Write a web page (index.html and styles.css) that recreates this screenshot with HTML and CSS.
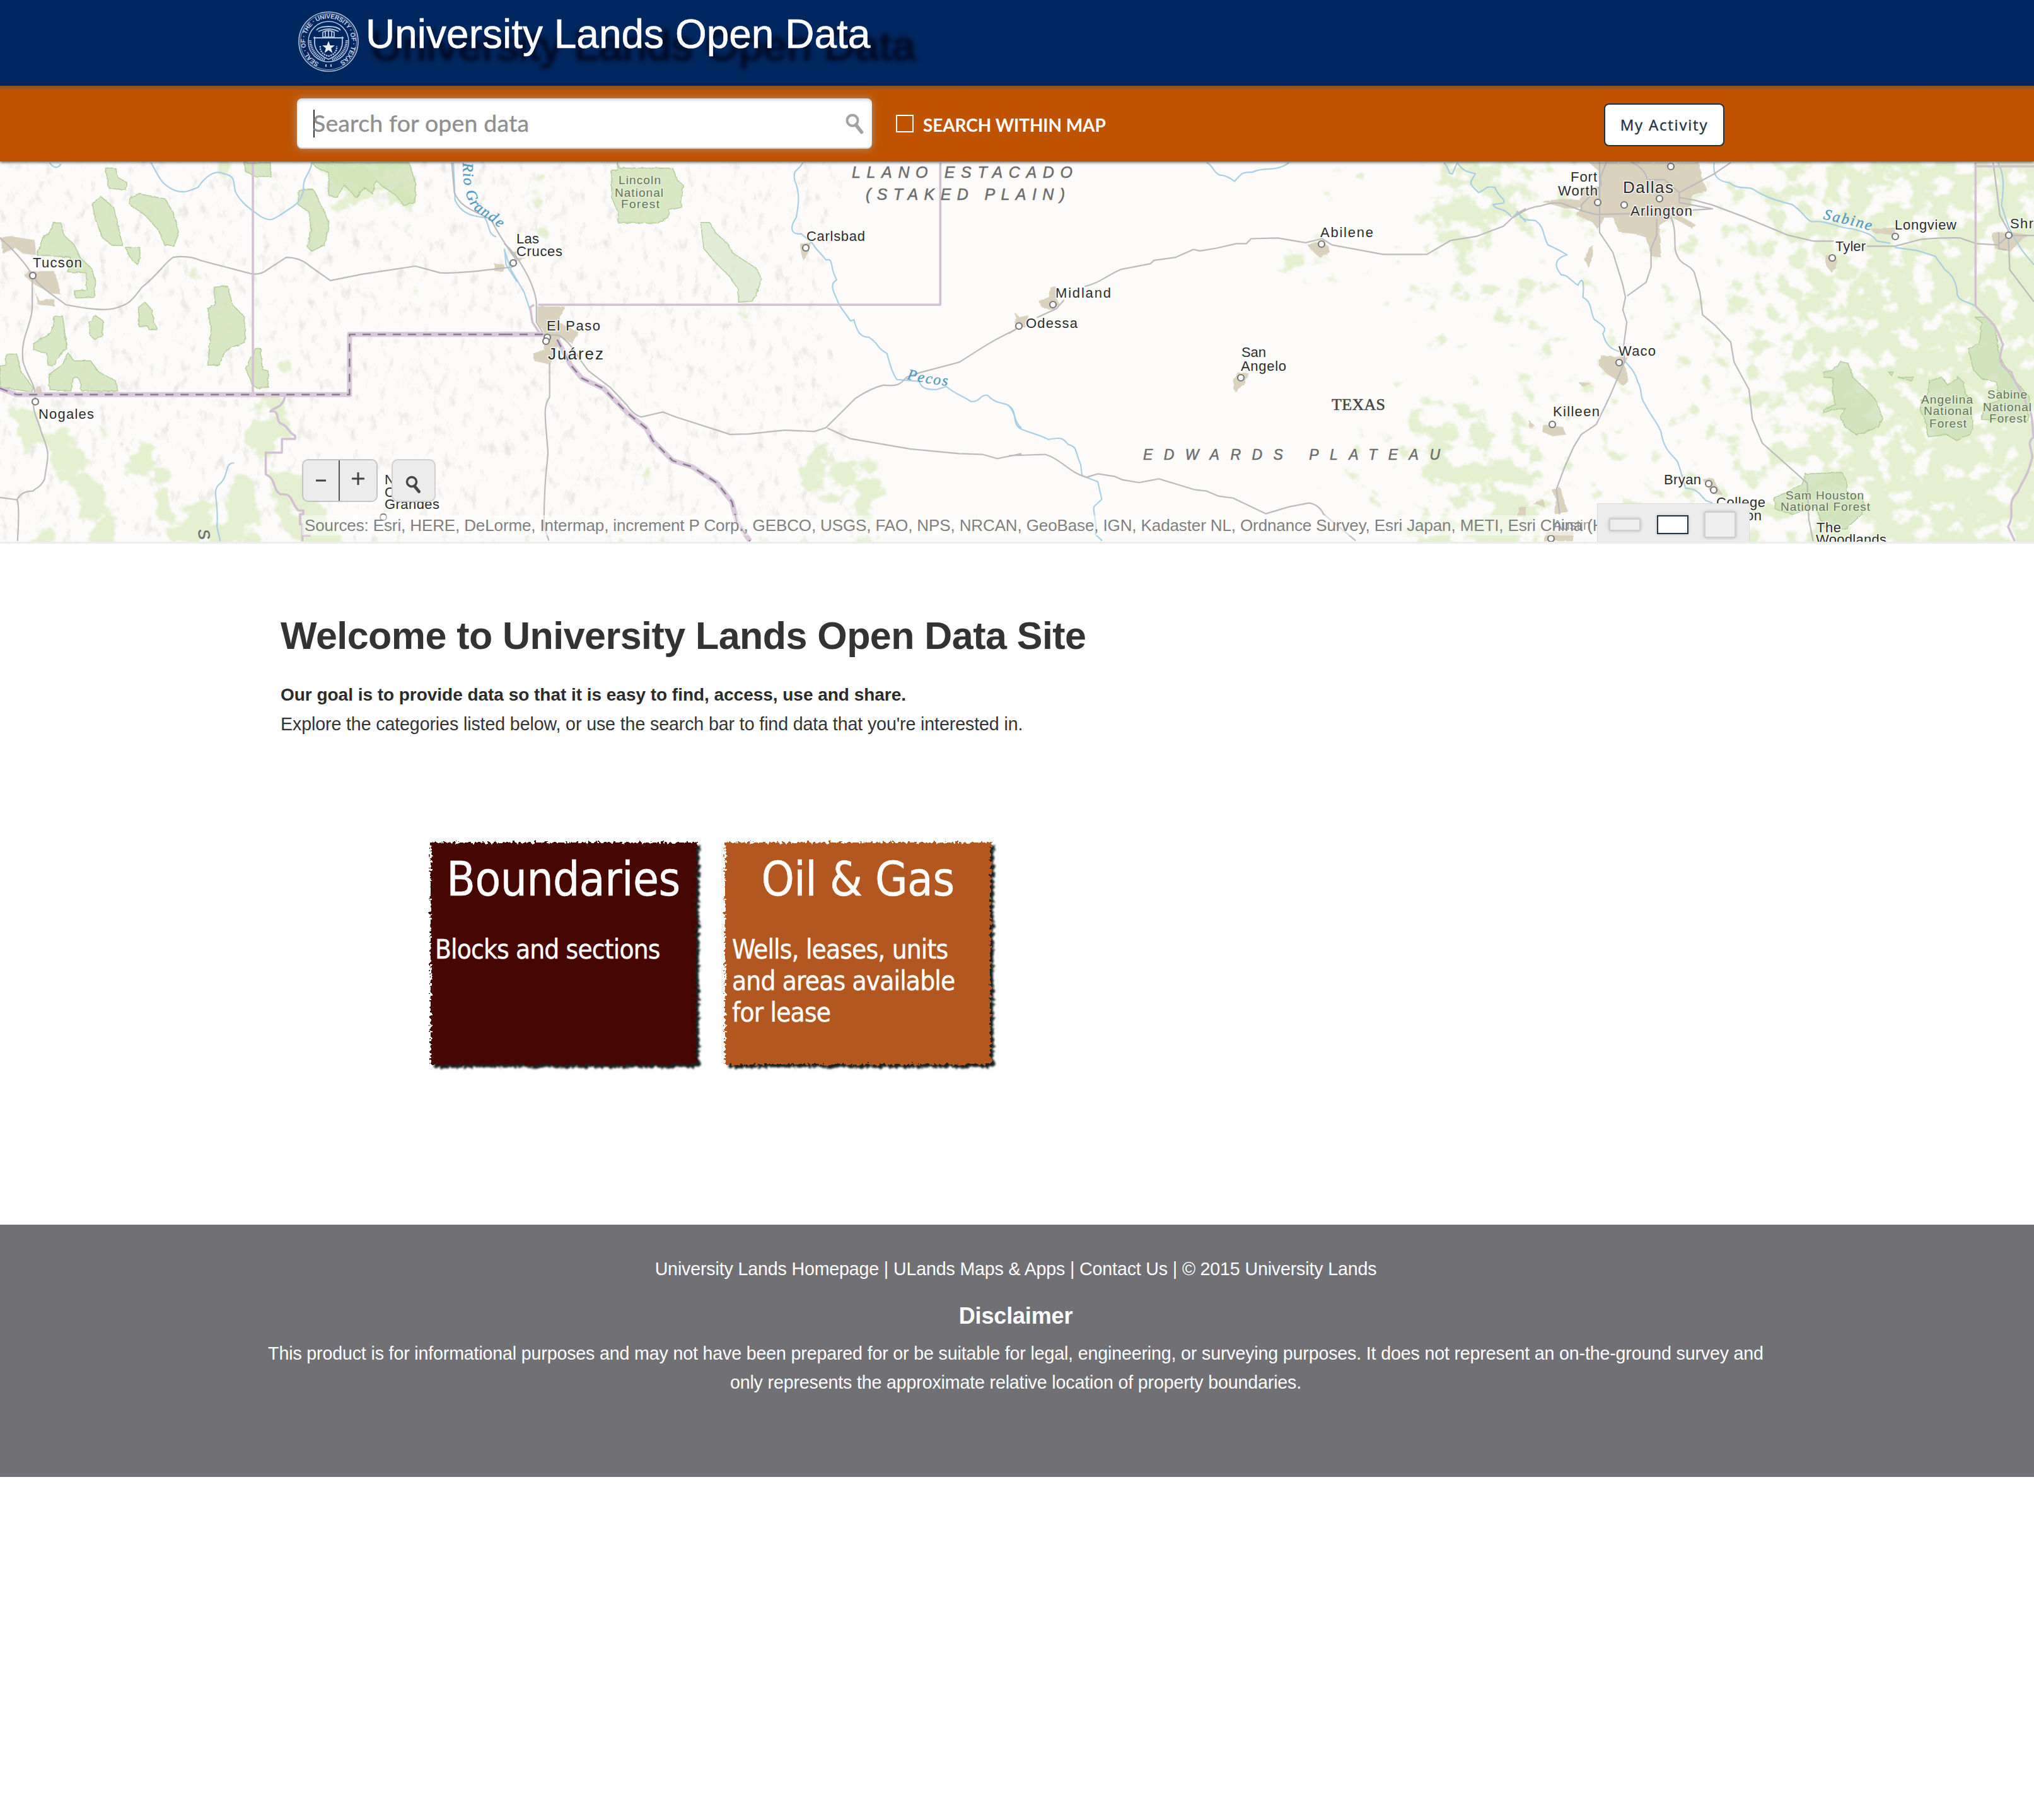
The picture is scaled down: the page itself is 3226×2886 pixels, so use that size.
FILE: index.html
```html
<!DOCTYPE html>
<html lang="en">
<head>
<meta charset="utf-8">
<title>University Lands Open Data</title>
<link rel="stylesheet" href="styles.css">
</head>
<body>
<header class="brand">
  <svg class="seal" viewBox="-50 -50 100 100" aria-hidden="true">
    <defs><path id="ring" d="M-15 33.5A36.7 36.7 0 1 1 15 33.5"/></defs>
    <g fill="none" stroke="#b4c4de">
      <circle r="47" stroke-width="1.6"/><circle r="44.6" stroke-width=".8"/><circle r="32" stroke-width="1.5"/>
      <path d="M-24 -6H24M-19 -18C-14 -26 14 -26 19 -18M-22 -8V2C-22 16 -8 25 0 28C8 25 22 16 22 2V-8" stroke-width="1.8"/>
      <path d="M-16 -16Q0 -24 16 -16M-9 -15Q0 -20 9 -15V-7H-9ZM-5 -16V-7M0 -17V-7M5 -16V-7" stroke-width="1.8"/>
      <path d="M-13 7C-14 16 -8 21 0 23C8 21 14 16 13 7" stroke-width="2.4" stroke-dasharray="2.5 1.2"/>
      <path d="M-29 -2C-28 14 -18 25 -5 29M29 -2C28 14 18 25 5 29" stroke-width="4" stroke-dasharray="1.6 1.2"/>
    </g>
    <path fill="#e9eff8" d="M0 -1L2.6 6H10L4.200 10.500L6.300 18L0 13.600L-6.300 18L-4.200 10.500L-10 6H-2.600Z"/>
    <text class="seal-text"><textPath href="#ring" textLength="196">SEAL · OF · THE · UNIVERSITY · OF · TEXAS</textPath></text>
    <path stroke="#b4c4de" stroke-width="2" d="M-4 36V40M4 36V40"/>
  </svg>
  <div class="brand-name">University Lands Open Data</div>
</header>

<div class="searchbar">
  <div class="search-field">
    <span class="placeholder">Search for open data</span>
    <svg class="search-icon" viewBox="0 0 30 34"><circle cx="11" cy="11" r="8.500" fill="none" stroke="#a3a3a3" stroke-width="4"/><path d="M16.500 18L25.500 29.500" stroke="#a3a3a3" stroke-width="5.500" stroke-linecap="round"/></svg>
  </div>
  <label class="within"><span class="box"></span><span class="within-text">SEARCH WITHIN MAP</span></label>
  <button class="activity">My Activity</button>
</div>

<section class="map">
<svg class="basemap" viewBox="0 256 3226 603" width="3226" height="603">
  <defs>
    <filter id="veg" filterUnits="userSpaceOnUse" x="-100" y="150" width="3500" height="820" color-interpolation-filters="sRGB">
      <feGaussianBlur in="SourceAlpha" stdDeviation="12" result="soft"/>
      <feTurbulence type="fractalNoise" baseFrequency=".03 .034" numOctaves="5" seed="8" result="n"/>
      <feColorMatrix in="n" type="matrix" values="0 0 0 0 0  0 0 0 0 0  0 0 0 0 0  0 0 0 1 0" result="m"/>
      <feComposite in="m" in2="soft" operator="arithmetic" k1="0" k2="1" k3="1" k4="-1"/>
      <feComponentTransfer result="a"><feFuncA type="linear" slope="8"/></feComponentTransfer>
      <feFlood flood-color="#e3efce"/><feComposite operator="in" in2="a"/>
      <feGaussianBlur stdDeviation=".8"/>
    </filter>
    <filter id="relief" filterUnits="userSpaceOnUse" x="0" y="250" width="3226" height="620" color-interpolation-filters="sRGB">
      <feTurbulence type="fractalNoise" baseFrequency=".07 .04" numOctaves="4" seed="3"/>
      <feColorMatrix type="matrix" values="0 0 0 0 .5  0 0 0 0 .48  0 0 0 0 .45  0 0 0 1.3 -.76" result="r"/>
      <feComposite in="r" in2="SourceAlpha" operator="in"/>
    </filter>
    <filter id="jag" filterUnits="userSpaceOnUse" x="0" y="0" width="1700" height="1620">
      <feTurbulence type="fractalNoise" baseFrequency=".06" numOctaves="2" seed="5"/>
      <feDisplacementMap in="SourceGraphic" scale="9"/>
    </filter>
    <linearGradient id="east" x1="0" x2="1"><stop offset="0" stop-opacity=".32"/><stop offset=".25" stop-opacity=".43"/><stop offset=".42" stop-opacity=".58"/><stop offset="1" stop-opacity=".68"/></linearGradient>
    <path id="rio" d="M734 258C734 296 740 322 754 334C770 346 782 350 800 370"/>
    <path id="pecos" d="M1438 601C1460 606 1480 610 1508 612"/>
    <path id="sabine" d="M2891 347C2920 354 2945 358 2974 368"/>
  </defs>
  <rect y="250" width="3226" height="620" fill="#fcfbf9"/>

  <g filter="url(#relief)">
    <path d="M0 250H1350L1300 480L1400 870H0Z" fill-opacity=".4"/>
  </g>

  <g filter="url(#veg)">
    <path d="M2560 150H3400V970H2540L2640 620Z" fill="url(#east)"/>
    <path d="M2860 420H3400V970H2900Z" fill-opacity=".12"/>
    <path d="M2400 150H2600V970H2330L2420 560Z" fill-opacity=".38"/>
    <path d="M2280 250L2400 200L2410 330L2340 430L2260 380Z" fill-opacity=".45"/>
    <path d="M2140 200H2420V520L2200 480L1990 390Z" fill-opacity=".28"/>
    <path d="M2220 640L2350 640L2430 870L2400 960H2200L2260 780Z" fill-opacity=".36"/>
    <path d="M2080 660H2440V970H2080Z" fill-opacity=".34"/>
    <path d="M2000 405L2100 400L2120 445L2060 456Z" fill-opacity=".54"/>
    <path d="M2180 450H2420V660H2180Z" fill-opacity=".28"/>
    <path d="M1295 680L1330 715L1410 730L1405 785L1355 795L1300 808L1255 765Z" fill-opacity=".68"/>
    <path d="M1350 780L1390 780L1410 880H1350Z" fill-opacity=".6"/>
    <path d="M1150 480L1195 480L1168 522Z" fill-opacity=".85"/>
    <path d="M990 690L1090 800L1040 790ZM1180 750L1220 860L1185 830Z" fill-opacity=".7"/>
    <path d="M10 630L55 645L70 705L40 722L17 695ZM73 670L115 665L123 735L90 800ZM125 690L170 775L200 878H140L113 770Z" fill-opacity=".76"/>
    <path d="M145 660H180L168 730ZM217 675L256 695L295 870H265L218 720ZM365 745L412 755L425 876H335ZM295 790L340 780L335 880H285Z" fill-opacity=".76"/>
    <path d="M390 640L445 620L468 635L466 695L410 745L383 700ZM420 730L495 755L570 878H465L425 780ZM185 720L220 715L204 790Z" fill-opacity=".76"/>
    <path d="M45 820H95V878H55ZM288 415L327 425L322 453L294 446ZM222 575L258 580L243 615ZM648 445L678 475L655 488ZM632 340L657 370L640 388ZM444 560H468V610H444Z" fill-opacity=".85"/>
    <path d="M335 240L385 240L375 305L340 300ZM395 270L455 250L475 305L425 315Z" fill-opacity=".6"/>
    <path d="M828 240L862 280L878 400L864 440L845 340Z" fill-opacity=".75"/>
    <path d="M490 240H665V340H515Z" fill-opacity=".6"/>
  </g>

  <!-- national forests, urban areas, rivers, roads and borders, west to east -->
  <g transform="translate(0 250) scale(.52296 .39541)">
    <g class="forest" filter="url(#jag)">
      <path d="M320 42H350L358 80L385 100L382 130L330 122ZM280 185L305 155L345 200L372 352H340L310 320L290 250ZM392 160L420 145L500 165L525 220L543 300L528 352H500L480 290L440 230L395 190ZM380 360H424V400L418 430L400 410Z"/>
      <path d="M162 262H185L193 310L225 350L243 400L278 445L290 500L285 560L230 563L225 535L262 530V462L205 458L215 400L112 390L130 320L150 300Z"/>
      <path d="M420 600L440 580L460 610L467 660L478 690H452L448 675H420ZM272 660L290 633L313 655L310 715L290 732L272 712ZM165 640L190 635L203 765L180 790L160 838L145 830L142 785L102 770V745L155 705Z"/>
      <path d="M650 520L690 515L705 590L742 640L743 740L685 770L665 832H630L640 690L630 605L652 590ZM0 835L18 832V788H52L60 850L98 920L98 940L0 920ZM148 870L190 830L205 782L225 815H275L300 860L350 895L357 936H246C246 880 232 875 222 885L215 936L150 930Z"/>
      <path d="M775 765H790L796 850L813 855V920L780 925L765 910L746 850ZM742 20H820V75H775L745 55ZM905 130L950 128L970 180L998 260L985 350L945 375L932 355L945 290L935 215L905 190Z"/>
      <path d="M945 20H1240L1262 110L1258 180L1225 192L1200 150L1160 115L1140 90L1130 145L1105 120L1080 160L1045 110L1020 160L997 150V60L960 40Z"/>
    </g>
    <g class="urban" filter="url(#jag)"><path d="M0 320L30 315L105 330L110 390L70 385L45 360L10 385ZM85 455L165 455L185 550L150 540L100 505L75 475ZM108 540L120 575L165 565V595L115 590ZM1500 425L1530 430L1525 455H1500ZM110 920H125V950H110ZM1550 380L1568 375V410Z"/></g>
    <g class="water"><path d="M150 20Q170 55 185 25M458 20C480 70 485 100 520 125C560 150 575 130 600 120C620 80 650 45 680 65C720 75 705 110 715 140C735 190 770 215 790 235C820 260 830 245 850 230C880 200 912 190 920 130C918 70 945 60 945 20M1375 20L1380 170C1400 230 1440 235 1470 240C1485 270 1480 310 1505 317M1530 365L1535 430L1568 498M710 1225C680 1220 695 1280 665 1310C640 1340 665 1370 658 1480L668 1538"/></g>
    <g class="road"><path d="M0 322C50 380 80 430 100 474C120 520 160 550 200 590C260 605 310 615 345 605C390 590 400 575 430 520C480 470 500 420 525 400Q570 390 610 413L760 465Q790 472 810 450L868 400Q910 400 940 435L1002 493L1100 467L1260 435L1335 462Q1400 465 1556 438M98 480V600C95 680 60 720 70 820C90 900 105 900 107 960C90 1010 120 1060 125 1100C155 1200 145 1190 135 1290C120 1330 105 1325 100 1337C75 1337 60 1350 52 1372L0 1363M52 1372Q60 1400 53 1538M1370 20L1378 140C1400 210 1450 215 1490 250C1520 330 1550 380 1568 415"/></g>
    <path class="state" d="M767 20V950M865 950C860 1010 825 1000 820 1018C850 1010 835 1050 850 1065C880 1080 870 1100 895 1115V1128H855V1183H806V1270C840 1290 825 1330 850 1350C890 1345 880 1380 905 1415H920V1430H910V1470H917V1538M915 1515H942"/>
    <path class="nation" d="M0 925L50 950H1060V709H1568"/><path class="nation-dash" d="M0 925L50 950H1060V709H1568"/>
  </g>

  <g transform="translate(800 250) scale(.52296 .39541)">
    <g class="forest" filter="url(#jag)">
      <path d="M343 20L350 42H510L525 90L542 110L535 200L500 210L495 240L465 262H345L345 220L325 160V50H343Z"/>
      <path class="pale" d="M595 260H622L640 300L680 350L690 380L765 445L780 490L755 575L710 580V530L685 480L640 420L605 365Z"/>
    </g>
    <g class="urban" filter="url(#jag)"><path d="M100 597H183L165 660L225 700L205 745L170 720L140 830L90 815L88 785L120 770V700L100 660ZM895 345L930 340L920 385L905 412ZM30 400L65 402L50 415ZM1550 620L1568 655V690L1550 680Z"/></g>
    <g class="water"><path d="M0 370L20 450L60 540L80 620M905 20C890 60 875 40 880 90C900 150 890 200 885 240C860 290 875 310 900 305L935 345C950 380 960 380 975 410C1000 400 985 440 1008 490C980 510 1005 550 1015 590L1050 655L1060 650C1070 700 1080 720 1105 720C1140 750 1125 760 1160 785C1170 830 1175 860 1190 890L1258 897C1265 930 1290 930 1310 930L1340 918C1370 950 1390 955 1415 978C1445 980 1440 950 1465 953C1490 990 1515 980 1530 995C1550 1020 1545 1060 1568 1085"/></g>
    <g class="road"><path d="M0 345C40 390 90 500 97 580V660L120 710L165 712C210 750 220 800 255 855L320 920L370 990C385 1020 400 1035 415 1040L480 1020L520 1040L685 1110L740 1108L850 1093L940 1098L975 1083L1065 965Q1110 925 1150 912C1200 920 1205 900 1220 880L1260 862L1380 820C1440 770 1470 740 1550 690M980 1085L1050 1127L1230 1168L1380 1187L1450 1190L1495 1207L1568 1187M137 825V960C115 1000 125 1050 132 1180C130 1250 120 1270 120 1480L135 1536"/></g>
    <path class="state" d="M102 590H1322V20M90 590L78 600L85 660L105 700"/>
    <path class="nation" d="M0 709H118M160 730L200 830L235 885L300 925L370 1020L430 1085L450 1135L510 1215L570 1240L645 1305L690 1380L705 1460L745 1538"/>
    <path class="nation-dash" d="M0 709H118M160 730L200 830L235 885L300 925L370 1020L430 1085L450 1135L510 1215L570 1240L645 1305L690 1380L705 1460L745 1538"/>
  </g>

  <g transform="translate(1600 250) scale(.52296 .39541)">
    <g class="urban" filter="url(#jag)"><path d="M125 520H145V560L155 590L130 610L100 600L90 575L120 560ZM30 640L60 632L50 680L20 690ZM905 350L940 335L970 355L972 380L945 402L925 380ZM695 860L728 865L715 910L685 942L680 900ZM1550 1400H1568V1440H1540Z"/></g>
    <g class="water"><path d="M600 20C620 30 620 60 640 70Q660 70 685 95C710 55 710 60 740 58C770 35 810 60 850 20M1320 20C1340 50 1330 65 1345 65L1360 20C1380 60 1395 55 1415 65C1400 100 1390 100 1425 140C1450 130 1440 110 1475 120C1480 150 1510 170 1500 182L1468 188C1480 215 1500 195 1525 238M1540 215L1568 258M0 995C30 1020 5 1070 40 1090C90 1115 80 1105 120 1130C160 1120 165 1125 180 1150C210 1160 200 1180 218 1230L222 1275L270 1300L282 1370L258 1400C255 1430 270 1460 262 1510L283 1536"/></g>
    <g class="road"><path d="M0 705L30 680M85 642L145 605L168 570M230 517C280 500 300 470 340 448L430 425L440 412L505 400L560 368L580 374L630 363L690 345H720L735 325L815 322L900 341L950 325L980 350L1135 388H1268L1340 332L1420 315L1500 275L1540 225L1568 205M0 1195L110 1190C160 1210 180 1260 235 1282L270 1268L320 1278L345 1292L395 1303L455 1288L565 1332L600 1337L635 1357L680 1365L780 1428L850 1400L910 1385Q940 1390 955 1430L1052 1536"/></g>
  </g>

  <g transform="translate(2400 250) scale(.52679 .39541)">
    <g class="forest dim" filter="url(#jag)">
      <path d="M935 865L975 840L985 818L1010 825L1022 880L1050 915L1070 940L1090 970L1112 1040L1100 1080L1070 1095L1035 1112L1000 1080L985 1040L1000 1005L960 1010L935 1025V1010L970 990L960 930L965 885L935 880Z"/>
      <path d="M1255 895L1290 880L1310 915L1340 880L1355 900L1360 945L1370 960L1385 1080L1375 1110L1335 1135L1305 1110L1250 1120L1240 1050L1225 1010L1230 970L1245 960Z"/>
      <path d="M1390 640L1425 640L1450 680L1465 800L1500 880L1555 960L1550 1055L1410 1050L1420 990L1465 975L1455 900L1410 885L1385 850L1372 770L1405 740L1410 660Z"/>
      <path d="M880 1268L990 1262L1005 1300L1005 1340L1055 1370L1050 1430L1000 1490L935 1480L910 1400L840 1430L790 1410L785 1360L820 1345L870 1310ZM1130 860L1145 860L1140 875ZM1160 882L1205 880L1200 895Z"/>
    </g>
    <g class="urban" filter="url(#jag)"><path d="M230 20H560L570 90L585 130L540 150L535 190L500 230L550 270L540 285L480 240L440 270L445 400L415 395L400 320L360 305L320 300L300 240H275L255 290L240 260L190 230L205 200L160 205L85 175L150 165L200 170L210 130L265 110L262 60ZM240 350V400L225 440L215 410L225 365ZM265 795L345 800L335 830L347 890L330 915L310 890L285 870L255 830ZM195 900L235 905L210 920ZM940 390L972 395L975 430L960 462L940 430ZM1075 285L1150 280L1150 310L1090 305ZM1440 300H1510L1550 310L1515 350L1500 378L1450 365ZM45 1050L65 1075L50 1085ZM90 1070L150 1080L160 1110L120 1118L88 1100ZM570 1290L600 1285L630 1350L600 1350ZM115 1330L140 1320L165 1420L125 1430L130 1370ZM60 1390L90 1370L95 1400ZM100 1500H180V1538H90Z"/></g>
    <g class="water"><path d="M0 240L15 215M20 235C40 260 60 245 70 255C95 280 90 320 105 350C140 370 150 380 162 390C120 405 125 440 145 470C165 470 170 490 195 512C205 480 215 480 210 560C240 580 230 620 245 650C280 680 280 690 270 705C280 760 300 770 325 780M335 815C360 850 370 870 375 900C390 930 380 960 395 985C420 1050 430 1050 445 1100C455 1180 480 1190 495 1220C510 1280 515 1300 518 1325C560 1330 560 1350 580 1375L600 1385M605 20C600 80 620 95 650 100C680 130 700 115 720 125C760 160 800 175 840 188C880 225 880 250 900 257C950 250 980 285 1020 285C1060 300 1080 305 1095 335L1135 343M1148 360L1215 372L1270 395L1300 450Q1335 480 1337 550C1345 580 1370 575 1395 598M1460 20C1475 60 1480 100 1470 190C1485 250 1490 290 1520 345C1530 375 1550 400 1568 430"/></g>
    <g class="road"><path d="M0 240C40 205 60 195 85 193Q125 175 150 185L205 212L250 228L350 225L470 238M260 20V300L300 380L330 510L338 560L330 610L342 660L333 750L335 820L290 960L250 1070L205 1110L182 1160L155 1240L130 1330L140 1430M360 20Q400 50 403 88H455L500 140L605 65L655 20M502 160L545 170L600 190L700 240L825 310L905 335H965M1065 355H1150L1230 327Q1300 320 1345 322L1395 345L1460 350L1492 312H1568M500 140V180L600 205L540 210M280 20L262 80L265 110L205 190V215M432 245V310L415 365V440L400 500L343 555M475 240C490 280 485 330 488 370C500 440 530 420 545 460L562 540L570 630L610 675L655 740L665 820L710 930L720 1050L750 1145L805 1210L885 1305L890 1450L903 1538M1445 20L1458 150L1465 230L1490 290L1495 450L1568 578M1462 300V365L1485 370"/></g>
    <path class="state" d="M1392 20V595L1425 640C1460 680 1460 710 1475 750C1455 820 1470 840 1500 860C1505 900 1540 950 1545 990C1570 1030 1560 1100 1568 1120C1545 1140 1560 1160 1563 1200C1550 1280 1530 1300 1520 1340C1480 1390 1515 1420 1490 1480L1510 1538M1392 35H1568"/>
  </g>

  <g class="town">
    <circle cx="52" cy="437" r="5"/><circle cx="56" cy="637" r="5"/><circle cx="814" cy="417" r="5"/><circle cx="868" cy="535" r="5"/><circle cx="866" cy="541" r="5"/><circle cx="1278" cy="393" r="5"/><circle cx="1670" cy="483" r="5"/><circle cx="1616" cy="517" r="5"/><circle cx="2096" cy="387" r="5"/><circle cx="1968" cy="599" r="5"/><circle cx="2534" cy="321" r="5"/><circle cx="2576" cy="325" r="5"/><circle cx="2632" cy="315" r="5"/><circle cx="2650" cy="264" r="5"/><circle cx="3006" cy="375" r="5"/><circle cx="2906" cy="409" r="5"/><circle cx="3186" cy="373" r="5"/><circle cx="2568" cy="575" r="5"/><circle cx="2462" cy="673" r="5"/><circle cx="2710" cy="767" r="5"/><circle cx="2718" cy="777" r="5"/><circle cx="2460" cy="854" r="5"/><circle cx="608" cy="820" r="5"/>
  </g>

  <g class="label">
    <text x="52" y="424" textLength="78">Tucson</text><text x="61" y="664" textLength="88">Nogales</text>
    <text x="819" y="386" textLength="36">Las</text><text x="819" y="406" textLength="73">Cruces</text>
    <text x="867" y="524" textLength="85">El Paso</text><text class="big" x="869" y="570" textLength="88">Juárez</text>
    <text x="1279" y="382" textLength="93">Carlsbad</text><text x="2094" y="376" textLength="84">Abilene</text>
    <text x="1674" y="472" textLength="88">Midland</text><text x="1627" y="520" textLength="82">Odessa</text>
    <text x="1969" y="566" textLength="39">San</text><text x="1968" y="588" textLength="72">Angelo</text>
    <text x="2491" y="288" textLength="42">Fort</text><text x="2471" y="310" textLength="63">Worth</text>
    <text class="big" x="2574" y="306" textLength="80">Dallas</text><text x="2586" y="342" textLength="98">Arlington</text>
    <text x="3005" y="364" textLength="98">Longview</text><text x="2911" y="398" textLength="48">Tyler</text><text x="3188" y="362" textLength="37">Shr</text>
    <text x="2567" y="564" textLength="59">Waco</text><text x="2463" y="660" textLength="74">Killeen</text><text x="2639" y="768" textLength="59">Bryan</text>
    <text x="2722" y="804" textLength="78">College</text><text x="2722" y="825" textLength="72">Station</text>
    <text x="2881" y="844" textLength="39">The</text><text x="2880" y="863" textLength="112">Woodlands</text>
    <text x="2463" y="840" textLength="60">Austin</text>
    <text x="610" y="768" textLength="62">Nuevo</text><text x="610" y="788" textLength="60">Casas</text><text x="610" y="807" textLength="87">Grandes</text>
  </g>
  <g class="label park">
    <text x="981" y="292" textLength="67">Lincoln</text><text x="975" y="312" textLength="77">National</text><text x="985" y="330" textLength="61">Forest</text>
    <text x="3047" y="640" textLength="82">Angelina</text><text x="3051" y="658" textLength="77">National</text><text x="3060" y="678" textLength="59">Forest</text>
    <text x="3152" y="632" textLength="63">Sabine</text><text x="3145" y="652" textLength="77">National</text><text x="3155" y="670" textLength="59">Forest</text>
    <text x="2832" y="792" textLength="124">Sam Houston</text><text x="2824" y="810" textLength="142">National Forest</text>
  </g>
  <g class="region">
    <text x="1351" y="282" textLength="350">LLANO ESTACADO</text><text x="1373" y="317" textLength="316">(STAKED PLAIN)</text>
    <text class="small" x="1813" y="729" textLength="471">EDWARDS PLATEAU</text>
    <text transform="translate(314 840) rotate(82)">S</text>
  </g>
  <text class="state-name" x="2112" y="650" textLength="85">TEXAS</text>
  <g class="river">
    <text><textPath href="#rio" textLength="128">Rio Grande</textPath></text>
    <text><textPath href="#pecos" textLength="66">Pecos</textPath></text>
    <text><textPath href="#sabine" textLength="78">Sabine</textPath></text>
  </g>
</svg>
<div class="attribution">Sources: Esri, HERE, DeLorme, Intermap, increment P Corp., GEBCO, USGS, FAO, NPS, NRCAN, GeoBase, IGN, Kadaster NL, Ordnance Survey, Esri Japan, METI, Esri China (Hong Kong)</div>
<div class="map-tools">
  <div class="zoom">
    <button class="tool minus"><svg viewBox="0 0 20 20" width="20" height="20"><path d="M2 10H18" stroke="#444" stroke-width="3"/></svg></button>
    <button class="tool plus"><svg viewBox="0 0 20 20" width="20" height="20"><path d="M0 10H20M10 0V20" stroke="#444" stroke-width="3"/></svg></button>
  </div>
  <button class="tool find"><svg viewBox="0 0 26 30" width="26" height="30"><circle cx="10" cy="10" r="7.500" fill="none" stroke="#474747" stroke-width="3.500"/><path d="M14.500 17L21.500 25.500" stroke="#474747" stroke-width="5" stroke-linecap="round"/></svg></button>
</div>
<div class="sizes"><span class="size flat"></span><span class="size active"></span><span class="size tall"></span></div>
</section>

<main class="content">
  <h1>Welcome to University Lands Open Data Site</h1>
  <p class="goal">Our goal is to provide data so that it is easy to find, access, use and share.</p>
  <p class="explore">Explore the categories listed below, or use the search bar to find data that you're interested in.</p>
  <div class="cards">
    <a class="card maroon"><h2>Boundaries</h2><p>Blocks and sections</p></a>
    <a class="card orange"><h2>Oil &amp; Gas</h2><p>Wells, leases, units<br>and areas available<br>for lease</p></a>
  </div>
</main>

<footer class="footer">
  <p class="links">University Lands Homepage | ULands Maps &amp; Apps | Contact Us | © 2015 University Lands</p>
  <h3>Disclaimer</h3>
  <p class="legal">This product is for informational purposes and may not have been prepared for or be suitable for legal, engineering, or surveying purposes. It does not represent an on-the-ground survey and<br>only represents the approximate relative location of property boundaries.</p>
</footer>

<svg width="0" height="0" class="defs"><filter id="torn" x="-5%" y="-5%" width="110%" height="110%" color-interpolation-filters="sRGB">
  <feTurbulence type="fractalNoise" baseFrequency=".2" numOctaves="2" seed="4" result="n"/>
  <feDisplacementMap in="SourceGraphic" in2="n" scale="12" xChannelSelector="R" yChannelSelector="G" result="d"/>
  <feGaussianBlur in="d" stdDeviation="1.500"/><feOffset dx="5" dy="5"/>
  <feColorMatrix values="0 0 0 0 .1  0 0 0 0 .13  0 0 0 0 .13  0 0 0 1 0" result="s"/>
  <feMerge><feMergeNode in="s"/><feMergeNode in="d"/></feMerge>
</filter></svg>
</body>
</html>
```
FILE: styles.css
```css
* { box-sizing: border-box; }
body { margin: 0; background: #fff; color: #333; font-family: "Liberation Sans", Arial, sans-serif; font-size: 28px; }
h1, h2, h3, p { margin: 0; }
button { margin: 0; padding: 0; font: inherit; }

.brand { height: 136px; background: #00275f; padding: 16px 0 0 471px; display: flex; align-items: flex-start; }
.seal { width: 100px; height: 100px; flex: none; }
.seal-text { font: bold 10px "Liberation Sans", sans-serif; fill: #c5d2e6; }
.brand-name { position: relative; z-index: 0; margin: 2px 0 0 9px; font-size: 64px; line-height: 72px; color: #fff; white-space: nowrap; -webkit-text-stroke: .6px #fff; }
.brand-name::before { content: "University Lands Open Data"; position: absolute; z-index: -1; left: 8px; top: 19px; color: #000a22; -webkit-text-stroke: 2px #000a22; filter: blur(3.5px); transform: scaleX(1.08); transform-origin: 0 0; }

.searchbar { position: relative; z-index: 2; height: 120px; background: #bf5300; padding: 0 491px 0 471px; display: flex; align-items: center; box-shadow: 0 2px 4px rgba(60,70,80,.75); background-image: linear-gradient(rgba(90,80,80,.55), rgba(90,80,80,0) 8px); }
.search-field { width: 912px; height: 80px; background: #fff; border-radius: 8px; display: flex; align-items: center; justify-content: space-between; padding: 0 12px 0 26px; box-shadow: 0 0 14px rgba(170,160,150,.8), inset 0 3px 4px rgba(130,140,150,.35), inset 0 -2px 1px rgba(130,140,150,.4); }
.placeholder { border-left: 2px solid #333; height: 44px; line-height: 41px; font: 37.5px/41px Lato, sans-serif; color: #8f8f8f; white-space: nowrap; letter-spacing: .15px; text-indent: -3px; -webkit-text-stroke: .4px #8f8f8f; }
.search-icon { width: 30px; height: 34px; position: relative; top: 1px; }
.within { margin-left: 38px; display: flex; align-items: center; color: #fff; font: 700 28px/36px Lato, sans-serif; }
.box { width: 28px; height: 28px; border: 2px solid #fff; margin-right: 15px; }
.within-text { position: relative; top: 2px; white-space: nowrap; letter-spacing: -.1px; }
.activity { margin-left: auto; margin-top: 4px; width: 191px; height: 68px; border: 2px solid #1f3343; border-radius: 8px; background: #fff; color: #1f3343; font: 24px/62px "Open Sans", sans-serif; letter-spacing: 1.8px; white-space: nowrap; -webkit-text-stroke: .4px #1f3343; }

.map { position: relative; height: 606px; border-bottom: 3px solid #ececec; overflow: hidden; }
.basemap { display: block; }
.basemap path { vector-effect: non-scaling-stroke; stroke-linejoin: round; }
.forest { fill: #cde1b2; fill-opacity: .75; stroke: #b4ce9a; stroke-width: 1.5; }
.forest .pale { fill: #dae8cd; }
.forest.dim { fill: #cbdfb6; }
.urban { fill: #d9d0bb; fill-opacity: .95; }
.water { fill: none; stroke: #a9cfe2; stroke-width: 2.2; }
.road { fill: none; stroke: #bcbabc; stroke-width: 2.2; }
.state { fill: none; stroke: #d2c0d3; stroke-width: 3.5; }
.nation { fill: none; stroke: #dac9da; stroke-width: 8; }
.nation-dash { fill: none; stroke: #8c7b91; stroke-width: 2.5; stroke-dasharray: 13 11; }
.town { fill: #fff; stroke: #777; stroke-width: 2.2; }
.label { font-size: 22px; fill: #2c2c2c; stroke: rgba(255,255,255,.8); stroke-width: 3; paint-order: stroke; }
.label .big { font-size: 26px; }
.label.park { font-size: 19px; fill: #64755b; stroke: rgba(235,243,220,.6); }
.region { font-size: 25px; font-style: italic; fill: #6c6c6c; stroke: #6c6c6c; stroke-width: .5; }
.region .small { font-size: 23px; }
.state-name { font: 26px "Liberation Serif", serif; fill: #444; stroke: #444; stroke-width: .5; }
.river { font: italic 24px "Liberation Serif", serif; fill: #539bc0; stroke: #539bc0; stroke-width: .4; }

.attribution { position: absolute; left: 479px; top: 561px; width: 2054px; height: 32px; padding-left: 4px; overflow: hidden; white-space: nowrap; background: rgba(255,255,255,.5); color: #808080; font-size: 26px; line-height: 33px; letter-spacing: -.12px; }
.map-tools { position: absolute; left: 479px; top: 472px; display: flex; gap: 22px; }
.zoom { display: flex; width: 120px; height: 68px; border: 2px solid #c4c4c4; border-radius: 10px; overflow: hidden; }
.tool { display: flex; align-items: center; justify-content: center; background: #ececec; border: 0; }
.minus { width: 58px; border-right: 2px solid #555; }
.plus { flex: 1; padding: 0 0 6px 0; }
.find { width: 70px; height: 68px; border: 2px solid #d0d0d0; border-radius: 10px; padding: 14px 1px 0 0; }
.sizes { position: absolute; left: 2533px; top: 542px; width: 242px; height: 61px; background: #ececec; border: 1px solid #dadada; border-bottom: 0; padding: 6px 21px 0 18px; display: flex; align-items: center; justify-content: space-between; }
.size { width: 50px; background: #eee; border: 2px solid #cfcfcf; box-shadow: 0 0 4px rgba(0,0,0,.25); border-radius: 3px; }
.flat { height: 20px; }
.active { height: 30px; background: #fff; border: 2px solid #1f3343; border-radius: 0; }
.tall { height: 42px; }

.content { height: 1080px; padding: 108px 0 0 445px; white-space: nowrap; }
.content h1 { font-size: 61px; letter-spacing: -.55px; line-height: 76px; }
.goal { margin-top: 33px; font-weight: bold; line-height: 46px; color: #2b2b2b; letter-spacing: -.03px; }
.explore { font-size: 28.6px; letter-spacing: -.11px; line-height: 46px; }
.cards { display: flex; gap: 46px; padding: 165px 0 0 238px; }
.card { position: relative; z-index: 0; width: 421px; height: 352px; color: #fff; font-family: "DejaVu Sans Condensed", "DejaVu Sans", sans-serif; font-stretch: condensed; }
.card::before { content: ""; position: absolute; z-index: -1; inset: 0; background: #460703; filter: url(#torn); }
.orange::before { background: #b1571f; }
.card h2 { font-size: 74px; letter-spacing: -.5px; font-weight: normal; line-height: 84px; padding-top: 16px; text-align: center; -webkit-text-stroke: .5px #fff; }
.card p { font-size: 42px; letter-spacing: -.85px; line-height: 50px; padding: 45px 0 0 7px; -webkit-text-stroke: .4px #fff; }
.orange p { padding-left: 11px; }

.footer { height: 400px; background: #717074; color: #fff; text-align: center; padding: 47px 4px 0 0; white-space: nowrap; font-size: 28.6px; letter-spacing: -.15px; }
.footer p { line-height: 46px; }
.footer h3 { font-size: 36px; line-height: 46px; margin: 29px 0 13px; }
.defs { position: absolute; }
```
